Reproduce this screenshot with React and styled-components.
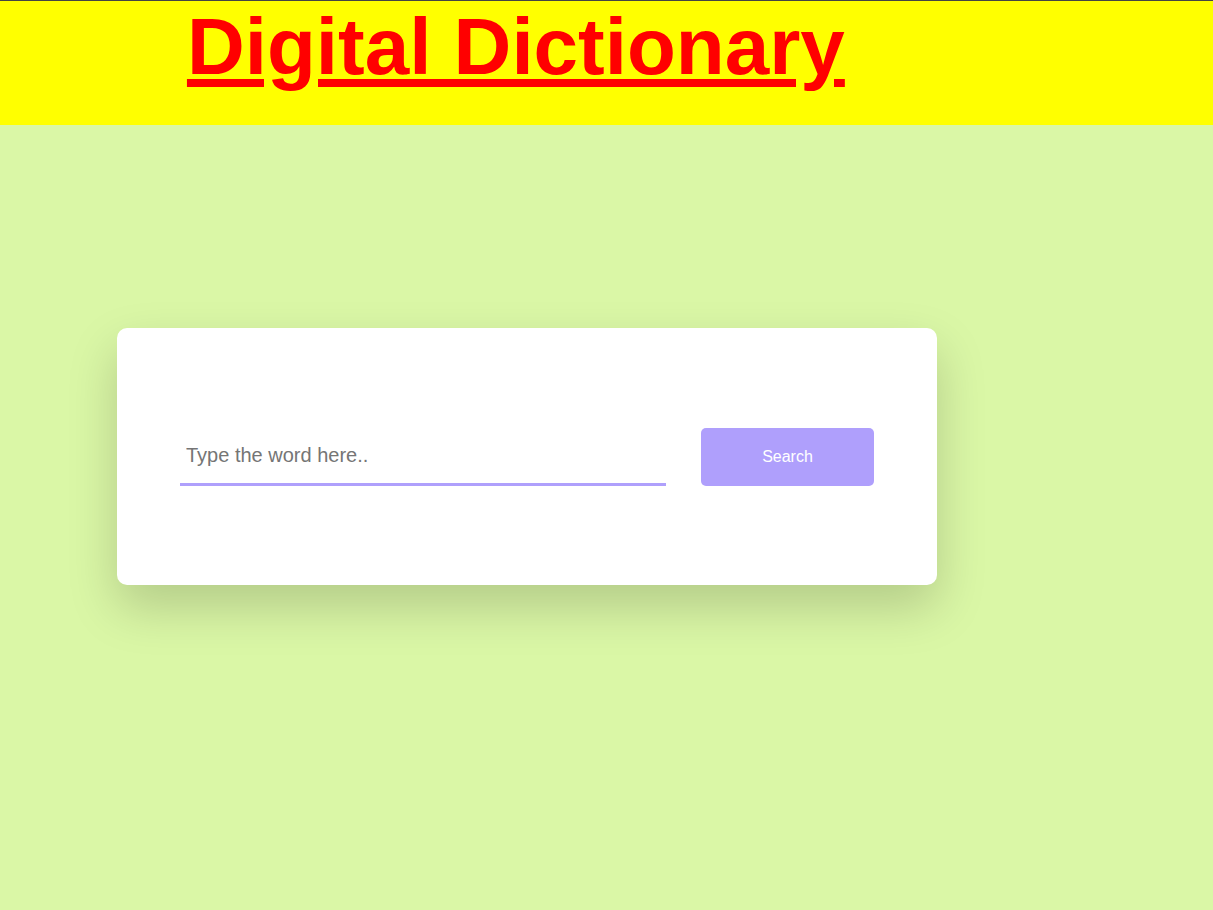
import React from 'react';
import styled, { createGlobalStyle } from 'styled-components';

const GlobalStyle = createGlobalStyle`
  html, body {
    margin: 0;
    padding: 0;
  }

  body {
    min-height: 910px;
    background-color: #daf7a6;
    font-family: "Liberation Sans", Arial, sans-serif;
  }
`;

const Header = styled.header`
  height: 124px;
  background-color: #ffff00;
  border-top: 1px solid #444;

  h1 {
    margin: 0 0 0 calc(15% + 5px);
    font-size: 80px;
    font-weight: 700;
    color: #ff0000;
    text-decoration: underline;
    text-decoration-thickness: 8px;
    text-underline-offset: 5px;
  }
`;

const Main = styled.main`
  padding: 203px 0 0 117px;
`;

const Card = styled.div`
  display: flex;
  align-items: center;
  gap: 35px;
  width: 820px;
  height: 257px;
  padding: 0 63px;
  box-sizing: border-box;
  background-color: #fff;
  border-radius: 10px;
  box-shadow: 0 22px 50px rgba(0, 0, 0, 0.18);
`;

const SearchInput = styled.input`
  width: 486px;
  height: 58px;
  padding: 0 6px;
  box-sizing: border-box;
  border: none;
  border-bottom: 3px solid #afa0fc;
  outline: none;
  font-family: inherit;
  font-size: 20px;
  color: #333;

  &::placeholder {
    color: #757575;
  }
`;

const SearchButton = styled.button`
  width: 173px;
  height: 58px;
  border: none;
  border-radius: 5px;
  background-color: #af9ffc;
  color: #fff;
  font-family: inherit;
  font-size: 16px;
  cursor: pointer;
`;

function App() {
  return (
    <>
      <GlobalStyle />
      <Header>
        <h1>Digital Dictionary</h1>
      </Header>
      <Main>
        <Card>
          <SearchInput type="text" placeholder="Type the word here.." />
          <SearchButton>Search</SearchButton>
        </Card>
      </Main>
    </>
  );
}

export default App;
